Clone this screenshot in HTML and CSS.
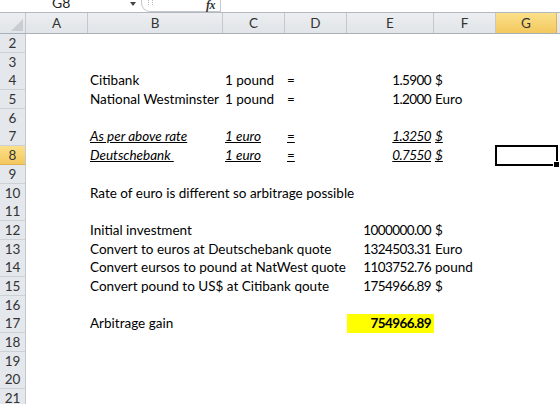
FILE: index.html
```html
<!DOCTYPE html>
<html>
<head>
<meta charset="utf-8">
<link rel="stylesheet" href="styles.css">
</head>
<body>
<div class="app">
  <div class="topbar">
    <div class="namebox"><span class="nametext">G8</span><span class="dd"></span></div>
    <div class="fxbox"><span class="grip"></span><span class="fx">fx</span></div>
    <div class="formula"></div>
  </div>
  <div class="colhdr">
    <div class="corner"><span class="tri"></span></div>
    <div class="ch">A</div><div class="ch">B</div><div class="ch">C</div><div class="ch">D</div><div class="ch">E</div><div class="ch">F</div><div class="ch selh">G</div><div class="ch last"></div>
  </div>
  <div class="sheet">
    <div class="row"><div class="rh">2</div></div>
    <div class="row"><div class="rh">3</div></div>
    <div class="row"><div class="rh">4</div><div class="cell b">Citibank</div><div class="cell c">1 pound</div><div class="cell d">=</div><div class="cell e num">1.5900</div><div class="cell f">$</div></div>
    <div class="row"><div class="rh">5</div><div class="cell b">National Westminster</div><div class="cell c">1 pound</div><div class="cell d">=</div><div class="cell e num">1.2000</div><div class="cell f">Euro</div></div>
    <div class="row"><div class="rh">6</div></div>
    <div class="row"><div class="rh">7</div><div class="cell b iu">As per above rate</div><div class="cell c iu">1 euro</div><div class="cell d u">=</div><div class="cell e num iu">1.3250</div><div class="cell f iu">$</div></div>
    <div class="row"><div class="rh selr">8</div><div class="cell b iu">Deutschebank&nbsp;</div><div class="cell c iu">1 euro</div><div class="cell d u">=</div><div class="cell e num iu">0.7550</div><div class="cell f iu">$</div><div class="cell g sel"></div></div>
    <div class="row"><div class="rh">9</div></div>
    <div class="row"><div class="rh">10</div><div class="cell b">Rate of euro is different so arbitrage possible</div></div>
    <div class="row"><div class="rh">11</div></div>
    <div class="row"><div class="rh">12</div><div class="cell b">Initial investment</div><div class="cell e num">1000000.00</div><div class="cell f">$</div></div>
    <div class="row"><div class="rh">13</div><div class="cell b">Convert to euros at Deutschebank quote</div><div class="cell e num">1324503.31</div><div class="cell f">Euro</div></div>
    <div class="row"><div class="rh">14</div><div class="cell b">Convert eursos to pound at NatWest quote</div><div class="cell e num">1103752.76</div><div class="cell f">pound</div></div>
    <div class="row"><div class="rh">15</div><div class="cell b">Convert pound to US$ at Citibank qoute</div><div class="cell e num">1754966.89</div><div class="cell f">$</div></div>
    <div class="row"><div class="rh">16</div></div>
    <div class="row"><div class="rh">17</div><div class="cell b">Arbitrage gain</div><div class="cell e num gain">754966.89</div></div>
    <div class="row"><div class="rh">18</div></div>
    <div class="row"><div class="rh">19</div></div>
    <div class="row"><div class="rh">20</div></div>
    <div class="row"><div class="rh">21</div></div>
  </div>
</div>
</body>
</html>
```
FILE: styles.css
```css
html, body { margin: 0; padding: 0; background: #fff; }
body { width: 560px; height: 404px; overflow: hidden; font-family: Lato, "Liberation Sans", sans-serif; }
.app { width: 560px; }

.topbar { height: 12px; border-bottom: 1px solid #b3b8be; display: flex; overflow: hidden; background: #fff; }
.namebox { width: 141px; display: flex; align-items: flex-start; position: relative; }
.nametext { margin-left: 52px; margin-top: -5px; font-size: 14px; line-height: 16px; color: #222; }
.dd { position: absolute; left: 130px; top: 2px; width: 0; height: 0; border-left: 3.5px solid transparent; border-right: 3.5px solid transparent; border-top: 4px solid #444; }
.fxbox { width: 78px; border: 1px solid #c4c8cd; border-top: none; border-bottom-left-radius: 9px; display: flex; align-items: flex-start; position: relative; }
.grip { margin-left: 6px; margin-top: 0; width: 3px; height: 5px; border-left: 1px dotted #bbb; border-right: 1px dotted #bbb; }
.fx { margin-left: auto; margin-right: 5px; margin-top: -2px; font-family: "Liberation Serif", serif; font-style: italic; font-weight: bold; font-size: 12px; line-height: 14px; color: #333; letter-spacing: -0.5px; }
.formula { flex: 1; }

.colhdr { display: grid; grid-template-columns: 26px 62px 135px 62px 62px 87px 62px 61px 1fr; height: 20px; border-bottom: 1px solid #a9b0b8; background: linear-gradient(#eceef1, #e1e4e8); }
.corner { border-right: 1px solid #c3c8ce; position: relative; }
.tri { position: absolute; right: 2px; bottom: 2px; width: 0; height: 0; border-left: 12px solid transparent; border-bottom: 12px solid #c9ccd0; }
.ch { border-right: 1px solid #c3c8ce; text-align: center; font-size: 13.5px; line-height: 20px; color: #333; }
.ch.last { border-right: none; }
.selh { background: linear-gradient(#fbe08a, #f3c85e); border-right-color: #e1b14f; }

.row { display: grid; grid-template-columns: 26px 62px 135px 62px 62px 87px 62px 61px 1fr; height: 18.7px; }
.rh { grid-column: 1; border-right: 1px solid #c3c8ce; border-bottom: 1px solid #cdd1d6; background: #e4e7eb; text-align: center; font-size: 13.5px; line-height: 18px; color: #333; box-sizing: border-box; }
.selr { background: linear-gradient(#fbe08a, #f3c85e); border-bottom-color: #e1b14f; }

.cell { grid-row: 1; font-size: 13.5px; line-height: 18.7px; color: #000; white-space: nowrap; padding-left: 2px; min-width: 0; }
.b { grid-column: 3; }
.c { grid-column: 4; }
.d { grid-column: 5; padding-left: 2px; }
.e { grid-column: 6; }
.f { grid-column: 7; padding-left: 1px; }
.g { grid-column: 8; }
.num { text-align: right; padding-left: 0; padding-right: 3px; letter-spacing: -0.6px; }
.iu { font-style: italic; text-decoration: underline; }
.u { text-decoration: underline; }
.gain { background: #ffff00; font-weight: bold; }
.sel { outline: 2px solid #000; outline-offset: -1px; position: relative; }
.sel::after { content: ""; position: absolute; right: -3px; bottom: -3px; width: 5px; height: 5px; background: #000; border: 1px solid #fff; }
```
